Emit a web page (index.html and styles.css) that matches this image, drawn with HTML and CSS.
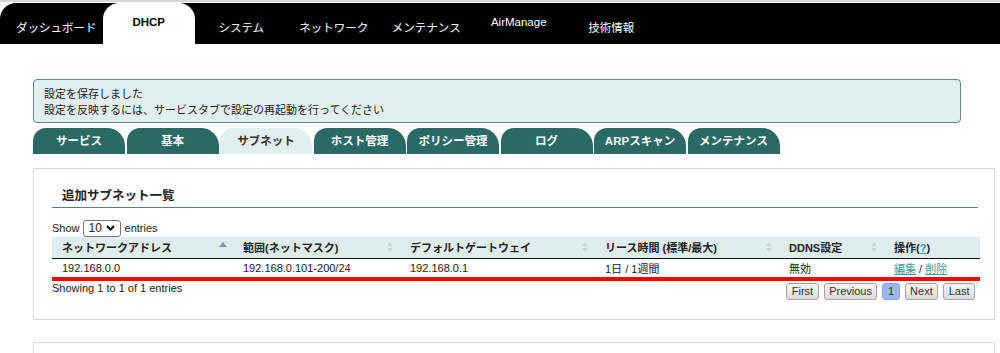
FILE: index.html
```html
<!DOCTYPE html>
<html lang="ja">
<head>
    <meta charset="UTF-8">
    <meta name="viewport" content="width=device-width, initial-scale=1.0">
    <title>DHCP - サブネット</title>
    <link rel="stylesheet" href="styles.css">
</head>
<body>
<div class="topbar">
    <nav class="nav">
        <a class="nav-item" href="#">ダッシュボード</a>
        <a class="nav-item nav-item-en active" href="#">DHCP</a>
        <a class="nav-item" href="#">システム</a>
        <a class="nav-item" href="#">ネットワーク</a>
        <a class="nav-item" href="#">メンテナンス</a>
        <a class="nav-item nav-item-en" href="#">AirManage</a>
        <a class="nav-item" href="#">技術情報</a>
    </nav>
</div>

<main class="content">
    <!-- 保存メッセージ -->
    <div class="notice">
        設定を保存しました<br>
        設定を反映するには、サービスタブで設定の再起動を行ってください
    </div>

    <ul class="subtabs">
        <li class="subtab">サービス</li>
        <li class="subtab">基本</li>
        <li class="subtab active">サブネット</li>
        <li class="subtab">ホスト管理</li>
        <li class="subtab">ポリシー管理</li>
        <li class="subtab">ログ</li>
        <li class="subtab">ARPスキャン</li>
        <li class="subtab">メンテナンス</li>
    </ul>

    <section class="panel">
        <h2 class="panel-title">追加サブネット一覧</h2>

        <div class="length">
            Show
            <span class="len-select">10
                <svg width="9" height="6" viewBox="0 0 9 6"><path d="M1 1 L4.5 4.5 L8 1" fill="none" stroke="#000" stroke-width="2"/></svg>
            </span>
            entries
        </div>

        <table class="subnets">
            <colgroup>
                <col class="col-net">
                <col class="col-range">
                <col class="col-gw">
                <col class="col-lease">
                <col class="col-ddns">
                <col class="col-op">
            </colgroup>
            <thead>
                <tr>
                    <th><div class="th-inner"><span>ネットワークアドレス</span>
                        <svg class="sort" width="8" height="12" viewBox="0 0 8 12"><path d="M0 6 L4 1 L8 6 Z" fill="#8a8ad8"/></svg>
                    </div></th>
                    <th><div class="th-inner"><span>範囲(ネットマスク)</span>
                        <svg class="sort" width="8" height="12" viewBox="0 0 8 12"><path d="M1 5 L4 1 L7 5 Z M1 7 L4 11 L7 7 Z" fill="#cdd8d8"/></svg>
                    </div></th>
                    <th><div class="th-inner"><span>デフォルトゲートウェイ</span>
                        <svg class="sort" width="8" height="12" viewBox="0 0 8 12"><path d="M1 5 L4 1 L7 5 Z M1 7 L4 11 L7 7 Z" fill="#cdd8d8"/></svg>
                    </div></th>
                    <th><div class="th-inner"><span>リース時間 (標準/最大)</span>
                        <svg class="sort" width="8" height="12" viewBox="0 0 8 12"><path d="M1 5 L4 1 L7 5 Z M1 7 L4 11 L7 7 Z" fill="#cdd8d8"/></svg>
                    </div></th>
                    <th><div class="th-inner"><span>DDNS設定</span>
                        <svg class="sort" width="8" height="12" viewBox="0 0 8 12"><path d="M1 5 L4 1 L7 5 Z M1 7 L4 11 L7 7 Z" fill="#cdd8d8"/></svg>
                    </div></th>
                    <th><span>操作(<a href="#">?</a>)</span></th>
                </tr>
            </thead>
            <tbody>
                <tr>
                    <td>192.168.0.0</td>
                    <td>192.168.0.101-200/24</td>
                    <td>192.168.0.1</td>
                    <td>1日 / 1週間</td>
                    <td>無効</td>
                    <td><a href="#">編集</a> / <a href="#">削除</a></td>
                </tr>
            </tbody>
        </table>

        <div class="table-foot">
            <div class="info">Showing 1 to 1 of 1 entries</div>
            <div class="paginate">
                <a class="page-btn" href="#">First</a>
                <a class="page-btn" href="#">Previous</a>
                <a class="page-btn current" href="#">1</a>
                <a class="page-btn" href="#">Next</a>
                <a class="page-btn" href="#">Last</a>
            </div>
        </div>
    </section>

    <section class="panel panel-next"></section>
</main>
</body>
</html>
```

FILE: styles.css
```css
/* Grundlayout */
body {
    margin: 0;
    background-color: #fff;
    color: #222;
    font-family: "Liberation Sans", "Noto Sans CJK JP", sans-serif;
    font-size: 11px;
}
a {
    color: #3f9c9c;
}

/* Hauptnavigation */
.topbar {
    border-top: 2px solid #d6d6d6;
    padding-top: 1px;
}
.nav {
    display: flex;
    height: 41px;
    padding-left: 10px;
    background-color: #000;
    border-top-left-radius: 16px;
}
.nav-item {
    width: 92.5px;
    display: flex;
    justify-content: center;
    align-items: center;
    padding-top: 7px;
    box-sizing: border-box;
    color: #fff;
    font-size: 11.5px;
    text-decoration: none;
}
.nav-item-en {
    padding-top: 0;
    padding-bottom: 3px;
}
.nav-item.active {
    background-color: #fff;
    color: #000;
    font-weight: bold;
    border-radius: 16px 16px 0 0;
}

.content {
    padding: 35px 0 0 33px;
}

/* Meldung */
.notice {
    width: 928px;
    box-sizing: border-box;
    padding: 6px 10px 4px;
    background-color: #e2efef;
    border: 1px solid #5e8d8b;
    border-radius: 4px;
    line-height: 16px;
}

/* Untertabs */
.subtabs {
    display: flex;
    gap: 1.5px;
    list-style: none;
    margin: 5px 0 0;
    padding: 0;
}
.subtab {
    width: 92px;
    height: 26px;
    line-height: 26px;
    text-align: center;
    background-color: #296a66;
    color: #fff;
    font-weight: bold;
    font-size: 11.5px;
    border-radius: 13px 18px 0 0 / 13px 18px 0 0;
}
.subtab.active {
    background-color: #e2efef;
    color: #333;
}

/* Panel */
.panel {
    width: 962px;
    box-sizing: border-box;
    margin-top: 14px;
    padding: 0 16px 19px 18px;
    border: 1px solid #d9d9d9;
}
.panel-next {
    margin-top: 22px;
    height: 60px;
}
.panel-title {
    margin: 0;
    padding: 18px 10px 2px;
    font-size: 12.5px;
    line-height: 18px;
    border-bottom: 1.5px solid #5b807f;
}

.length {
    margin-top: 11.5px;
    height: 17px;
    line-height: 17px;
    display: flex;
    align-items: center;
    gap: 3px;
}
.len-select {
    width: 38px;
    height: 17px;
    box-sizing: border-box;
    display: flex;
    align-items: center;
    justify-content: space-between;
    padding: 0 5px 0 5px;
    border: 1px solid #767676;
    border-radius: 3px;
    font-size: 12px;
    margin-right: 1px;
}

/* Tabelle */
.subnets {
    width: 100%;
    border-collapse: collapse;
    table-layout: fixed;
}
.col-net { width: 181px; }
.col-range { width: 167px; }
.col-gw { width: 195px; }
.col-lease { width: 184px; }
.col-ddns { width: 105px; }
.col-op { width: 96px; }

.subnets th {
    height: 21px;
    padding: 0 6px 0 10px;
    background-color: #e0eded;
    border-bottom: 1px solid #111;
    text-align: left;
    font-weight: bold;
}
.th-inner {
    display: flex;
    justify-content: space-between;
    align-items: center;
}
.subnets td {
    height: 18px;
    padding: 0 10px;
    border-bottom: 4px solid #f00;
}

.table-foot {
    display: flex;
    justify-content: space-between;
    align-items: flex-start;
}
.info {
    line-height: 14px;
}
.paginate {
    display: flex;
    gap: 5px;
    margin: 2px 3px 0 0;
}
.page-btn {
    height: 17px;
    line-height: 15px;
    box-sizing: border-box;
    padding: 0 4.5px;
    border: 1px solid #a3a3a3;
    border-radius: 3px;
    background: linear-gradient(#f7f7f7, #dcdcdc);
    color: #333;
    text-decoration: none;
}
.page-btn.current {
    background: #9bb6f5;
    border-color: #8ea6e6;
}
```
